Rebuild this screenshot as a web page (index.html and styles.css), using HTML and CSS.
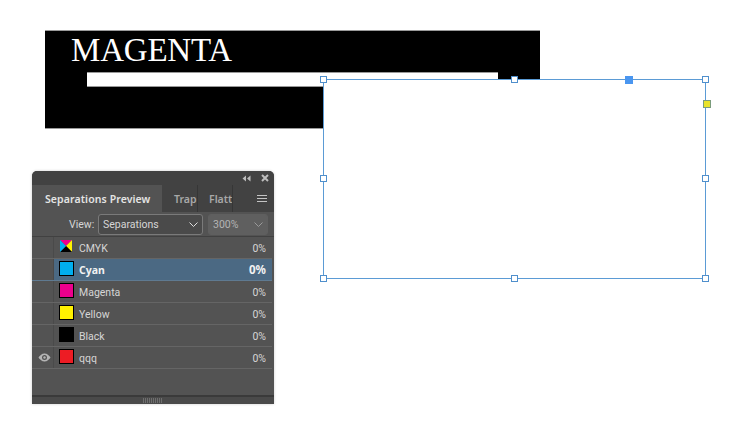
FILE: index.html
```html
<!DOCTYPE html>
<html lang="en">
<head>
<meta charset="utf-8">
<title>Separations Preview</title>
<link rel="stylesheet" href="styles.css">
</head>
<body>
<div class="canvas">
  <div class="page-block">
    <div class="headline">MAGENTA</div>
    <div class="white-bar"></div>
  </div>

  <div class="frame">
    <span class="handle h-tl"></span><span class="handle h-tc"></span><span class="handle h-tr"></span>
    <span class="handle h-ml"></span><span class="handle h-mr"></span>
    <span class="handle h-bl"></span><span class="handle h-bc"></span><span class="handle h-br"></span>
    <span class="port-blue"></span>
    <span class="port-yellow"></span>
  </div>

  <section class="panel">
    <div class="titlebar">
      <svg class="collapse" width="9" height="7" viewBox="0 0 9 7"><path d="M4 0.500v6L0.500 3.500zM8.500 0.500v6L5 3.500z" fill="#bdbdbd"/></svg>
      <svg class="close" width="8" height="8" viewBox="0 0 8 8"><path d="M1 1l6 6M7 1l-6 6" stroke="#bdbdbd" stroke-width="2"/></svg>
    </div>
    <div class="tabs">
      <div class="tab tab-active">Separations Preview</div>
      <div class="tab tab-trap">Trap</div>
      <div class="tab tab-flat">Flatt</div>
      <div class="tab-rest"><span class="menu-icon"></span></div>
    </div>
    <div class="view-row">
      <span class="view-label">View:</span>
      <div class="select"><span>Separations</span><svg width="9" height="5" viewBox="0 0 9 5"><path d="M0.500 0.500l4 4 4-4" fill="none" stroke="#dcdcdc"/></svg></div>
      <div class="select select-off"><span>300%</span><svg width="9" height="5" viewBox="0 0 9 5"><path d="M0.500 0.500l4 4 4-4" fill="none" stroke="#9a9a9a"/></svg></div>
    </div>
    <div class="rows">
      <div class="row">
        <div class="eye"></div>
        <div class="cell">
          <svg class="cmyk" width="12" height="12" viewBox="0 0 12 12">
            <path d="M0 0h12L6 6z" fill="#ec008c"/><path d="M12 0v12L6 6z" fill="#fff200"/><path d="M0 12h12L6 6z" fill="#000"/><path d="M0 0v12l6-6z" fill="#00aeef"/>
          </svg>
          <span class="name">CMYK</span><span class="pct">0%</span>
        </div>
      </div>
      <div class="row row-sel">
        <div class="eye"></div>
        <div class="cell">
          <span class="swatch sw-cyan"></span>
          <span class="name">Cyan</span><span class="pct">0%</span>
        </div>
      </div>
      <div class="row">
        <div class="eye"></div>
        <div class="cell"><span class="swatch sw-magenta"></span><span class="name">Magenta</span><span class="pct">0%</span></div>
      </div>
      <div class="row">
        <div class="eye"></div>
        <div class="cell"><span class="swatch sw-yellow"></span><span class="name">Yellow</span><span class="pct">0%</span></div>
      </div>
      <div class="row">
        <div class="eye"></div>
        <div class="cell"><span class="swatch sw-black"></span><span class="name">Black</span><span class="pct">0%</span></div>
      </div>
      <div class="row">
        <div class="eye">
          <svg width="13" height="9" viewBox="0 0 13 9"><path d="M0.500 4.500C3 1 5 0.500 6.500 0.500S10 1 12.500 4.500C10 8 8 8.500 6.500 8.500S3 8 0.500 4.500z" fill="#b5b5b5"/><circle cx="6.500" cy="4.500" r="2.500" fill="#535353"/><circle cx="6.500" cy="4.500" r="1.200" fill="#b5b5b5"/></svg>
        </div>
        <div class="cell"><span class="swatch sw-red"></span><span class="name">qqq</span><span class="pct">0%</span></div>
      </div>
    </div>
    <div class="spacer"></div>
    <div class="footer"><span class="grip"></span></div>
  </section>
</div>
</body>
</html>
```

FILE: styles.css
```css
html, body {
  margin: 0;
  padding: 0;
  background: #fff;
}
.canvas {
  position: relative;
  width: 737px;
  height: 436px;
  overflow: hidden;
  background: #fff;
  font-family: Roboto, "Noto Sans", sans-serif;
}
.page-block {
  position: absolute;
  left: 45px;
  top: 31px;
  width: 495px;
  height: 97px;
  background: #000;
  box-shadow: 0 -1px 0 #9a9a9a, 0 1px 0 #9a9a9a;
}
.headline {
  margin: 1px 0 0 26px;
  height: 41px;
  font-family: "Liberation Serif", serif;
  font-size: 33px;
  line-height: 36px;
  letter-spacing: -0.2px;
  color: #fff;
}
.white-bar {
  margin-left: 42px;
  width: 411px;
  height: 13px;
  background: #fff;
  box-shadow: 0 -1px 0 #999, 0 1px 0 #999;
}
.frame {
  position: absolute;
  left: 323px;
  top: 79px;
  width: 381px;
  height: 198px;
  background: #fff;
  border: 1px solid #5b9bd5;
}
.handle {
  position: absolute;
  width: 5px;
  height: 5px;
  background: #fff;
  border: 1px solid #4f8fcc;
}
.h-tl { left: -4px; top: -4px; }
.h-tc { left: 187px; top: -4px; }
.h-tr { right: -4px; top: -4px; }
.h-ml { left: -4px; top: 95px; }
.h-mr { right: -4px; top: 95px; }
.h-bl { left: -4px; bottom: -4px; }
.h-bc { left: 187px; bottom: -4px; }
.h-br { right: -4px; bottom: -4px; }
.port-blue {
  position: absolute;
  left: 301px;
  top: -4px;
  width: 8px;
  height: 8px;
  background: #4a96f0;
}
.port-yellow {
  position: absolute;
  right: -6px;
  top: 20px;
  width: 6px;
  height: 6px;
  background: #e9e32a;
  border: 1px solid #7b9c7c;
}
.panel {
  position: absolute;
  left: 32px;
  top: 171px;
  width: 242px;
  height: 233px;
  display: flex;
  flex-direction: column;
  background: #535353;
  border-radius: 5px 5px 0 0;
  box-shadow: 0 0 3px rgba(0, 0, 0, 0.2);
  overflow: hidden;
  font-size: 10.500px;
  color: #d6d6d6;
}
.titlebar {
  height: 14px;
  flex: none;
  display: flex;
  align-items: center;
  justify-content: flex-end;
  gap: 10px;
  padding-right: 5px;
  background: #424242;
}
.tabs {
  height: 27px;
  flex: none;
  display: flex;
  background: #424242;
}
.tab {
  display: flex;
  align-items: center;
  font-family: "Noto Sans", sans-serif;
  font-weight: 600;
  white-space: nowrap;
  overflow: hidden;
  box-sizing: border-box;
}
.tab-active {
  width: 130px;
  padding-left: 13px;
  background: #535353;
  color: #e4e4e4;
  letter-spacing: 0.1px;
}
.tab-trap {
  width: 36px;
  padding-left: 12px;
  color: #a8a8a8;
  border-right: 1px solid #363636;
}
.tab-flat {
  width: 35px;
  padding-left: 11px;
  color: #a8a8a8;
  border-right: 1px solid #363636;
}
.tab-rest {
  flex: 1;
  display: flex;
  align-items: center;
  justify-content: flex-end;
  padding-right: 7px;
}
.menu-icon {
  display: block;
  width: 10px;
  height: 5px;
  border-top: 1px solid #c4c4c4;
  border-bottom: 1px solid #c4c4c4;
  background: linear-gradient(#c4c4c4, #c4c4c4) center / 100% 1px no-repeat;
}
.view-row {
  height: 25px;
  flex: none;
  display: flex;
  align-items: center;
  box-sizing: border-box;
  padding-left: 37px;
  border-bottom: 1px solid #414141;
}
.view-label {
  width: 29px;
}
.select {
  box-sizing: border-box;
  width: 105px;
  height: 21px;
  display: flex;
  align-items: center;
  justify-content: space-between;
  padding: 0 4px;
  border: 1px solid #7a7a7a;
  border-radius: 3px;
  background: #4a4a4a;
}
.select-off {
  width: 60px;
  margin-left: 5px;
  border-color: #5f5f5f;
  background: #5f5f5f;
  color: #b4b4b4;
}
.rows {
  flex: none;
  display: flex;
  flex-direction: column;
  margin-right: 2px;
}
.row {
  height: 22px;
  box-sizing: border-box;
  display: flex;
  border-bottom: 1px solid #656565;
}
.eye {
  width: 22px;
  flex: none;
  box-sizing: border-box;
  display: flex;
  align-items: center;
  justify-content: center;
  padding-left: 3px;
  border-right: 1px solid #4a4a4a;
}
.cell {
  flex: 1;
  display: flex;
  align-items: center;
  padding: 0 6px 0 5px;
}
.name,
.pct {
  margin-top: 2px;
}
.row-sel {
  border-bottom-color: #5f7a91;
}
.row-sel .cell {
  background: #4b6983;
  color: #f2f2f2;
  font-family: "Noto Sans", sans-serif;
  font-weight: 700;
}
.row-sel .name,
.row-sel .pct {
  margin-top: 0;
}
.row-sel .pct {
  font-size: 11.500px;
}
.swatch {
  width: 13px;
  height: 13px;
  flex: none;
  border: 1px solid #000;
  margin-bottom: 2px;
}
.cmyk {
  flex: none;
  margin: 0 2px 4px 1px;
}
.sw-cyan { background: #00aeef; }
.sw-magenta { background: #ec008c; }
.sw-yellow { background: #fff200; }
.sw-black { background: #000; }
.sw-red { background: #ed1c24; }
.name {
  margin-left: 5px;
  flex: 1;
}
.spacer {
  flex: 1;
}
.footer {
  height: 9px;
  flex: none;
  box-sizing: border-box;
  display: flex;
  justify-content: center;
  align-items: center;
  border-top: 2px solid #3a3a3a;
  background: #4a4a4a;
}
.grip {
  display: block;
  width: 20px;
  height: 5px;
  background: repeating-linear-gradient(90deg, #6e6e6e 0 1px, transparent 1px 2px);
}
```
